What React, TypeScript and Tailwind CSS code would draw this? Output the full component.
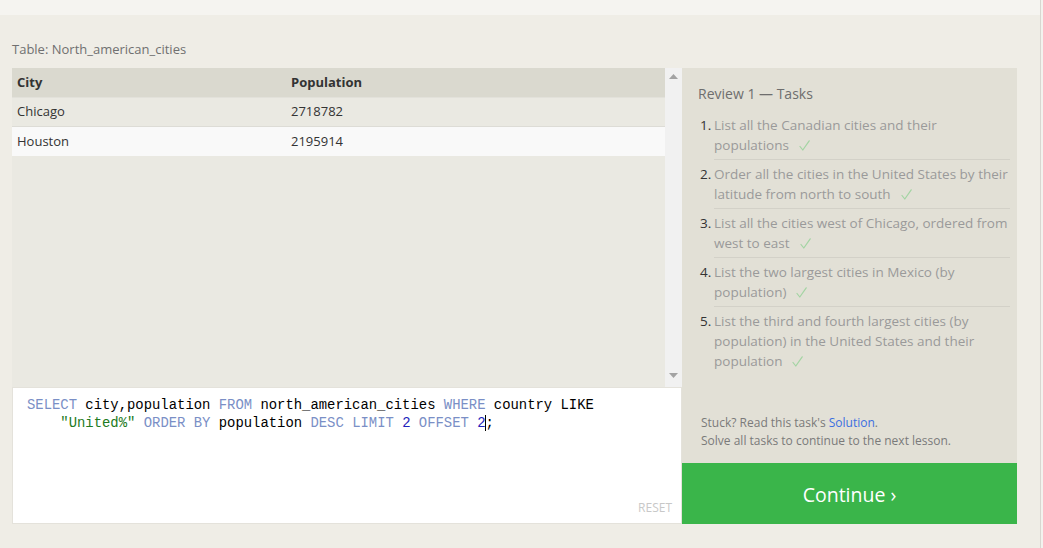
import React from "react";

const ui = { fontFamily: "'Open Sans', Lato, sans-serif" };
const mono = { fontFamily: "'Liberation Mono', 'DejaVu Sans Mono', monospace" };

const tasks: string[] = [
  "List all the Canadian cities and their populations",
  "Order all the cities in the United States by their latitude from north to south",
  "List all the cities west of Chicago, ordered from west to east",
  "List the two largest cities in Mexico (by population)",
  "List the third and fourth largest cities (by population) in the United States and their population",
];

function Arrow({ up }: { up: boolean }) {
  return (
    <svg width="9" height="6" viewBox="0 0 9 6">
      {up ? <polygon points="0,5 4.5,0 9,5" fill="#a3a3a3" /> : <polygon points="0,0 4.5,5 9,0" fill="#a3a3a3" />}
    </svg>
  );
}

function Check() {
  return (
    <svg className="inline-block ml-[10px] align-[-1px]" width="11" height="11" viewBox="0 0 11 11">
      <path d="M1 6.5 L3.8 10 L10.2 0.8" fill="none" stroke="#a3d4a3" strokeWidth="1.2" strokeLinecap="round" strokeLinejoin="round" />
    </svg>
  );
}

export default function App() {
  return (
    <div className="relative w-[1043px] h-[548px] overflow-hidden bg-[#efede6]" style={ui}>
      <div className="h-[15px] bg-[#f5f4f0]" />
      <div className="pl-[12px] pt-[25px]">
        <div className="text-[13px] leading-[18px] text-[#707070] mb-[10px]">Table: North_american_cities</div>
        <div className="flex">
          <div className="w-[670px] flex flex-col">
            <div className="h-[319px] flex">
              <div className="flex-1 bg-[#eae9e2] text-[13px] text-[#333]">
                <div className="flex h-[30px] items-center bg-[#dad9cf] border-b border-[#e2e1da] font-bold">
                  <div className="w-[279px] pl-[5px]">City</div>
                  <div>Population</div>
                </div>
                <div className="flex h-[29px] items-center border-b border-[#dddcd6]">
                  <div className="w-[279px] pl-[5px]">Chicago</div>
                  <div>2718782</div>
                </div>
                <div className="flex h-[29px] items-center bg-[#f9f9f9]">
                  <div className="w-[279px] pl-[5px]">Houston</div>
                  <div>2195914</div>
                </div>
              </div>
              <div className="w-[17px] bg-[#f1f1f1] flex flex-col items-center justify-between pt-[6px] pb-[8px]">
                <Arrow up />
                <Arrow up={false} />
              </div>
            </div>
            <div className="relative h-[137px] bg-white border border-[#e4e2db] pl-[14px] pt-[8px]">
              <div className="text-[13.9px] leading-[18px] text-black whitespace-pre" style={mono}>
                <div>
                  <span className="text-[#7a8fc6]">SELECT</span> city,population <span className="text-[#7a8fc6]">FROM</span> north_american_cities <span className="text-[#7a8fc6]">WHERE</span> country LIKE
                </div>
                <div>
                  {"    "}
                  <span className="text-[#217a21]">"United%"</span> <span className="text-[#7a8fc6]">ORDER BY</span> population <span className="text-[#7a8fc6]">DESC</span> <span className="text-[#7a8fc6]">LIMIT</span> <span className="text-[#2222bb]">2</span> <span className="text-[#7a8fc6]">OFFSET</span> <span className="text-[#2222bb]">2</span>
                  <span className="border-l border-black ml-[-1px]">;</span>
                </div>
              </div>
              <div className="absolute right-[9px] bottom-[6px] text-[12px] text-[#c8c8c8]">RESET</div>
            </div>
          </div>
          <div className="w-[335px] flex flex-col">
            <div className="flex-1 bg-[#e2e0d6] pl-[16px] pr-[7px] pt-[17px] flex flex-col">
              <div className="text-[14px] leading-[18px] text-[#6e6e6e]">Review 1 — Tasks</div>
              <ol className="mt-[12px]">
                {tasks.map((t, i) => (
                  <li key={i} className="flex">
                    <span className="w-[16px] pl-[2px] text-[13.5px] leading-[20px] text-[#333]">{i + 1}.</span>
                    <div className={"flex-1 text-[13.5px] leading-[20px] text-[#9a9a9a] pb-[4px] mb-[4px] " + (i < tasks.length - 1 ? "border-b border-[#d3d1c8]" : "")}>
                      {t}
                      <Check />
                    </div>
                  </li>
                ))}
              </ol>
              <div className="mt-auto mb-[13px] pl-[3px] text-[12px] leading-[18px] text-[#7a7a7a]">
                <div>
                  Stuck? Read this task's <span className="text-[#3b6fe0]">Solution</span>.
                </div>
                <div>Solve all tasks to continue to the next lesson.</div>
              </div>
            </div>
            <div className="h-[61px] bg-[#3ab54a] flex items-center justify-center text-white text-[19.5px] pt-[2px]">Continue ›</div>
          </div>
        </div>
      </div>
      <div className="absolute right-0 top-0 h-full w-[3px] bg-[#f3f2ee] border-l border-[#d8d6d0]" />
    </div>
  );
}
